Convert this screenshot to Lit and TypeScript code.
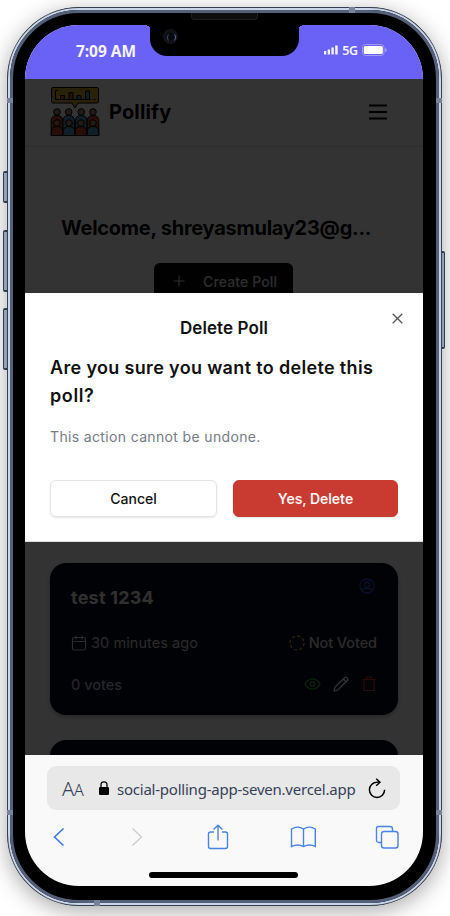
import { LitElement, html, css, svg } from "lit";
import { customElement } from "lit/decorators.js";

const people = [
  { x: 7, y: 26, c: "#c9412c" },
  { x: 18.7, y: 26, c: "#4f9cc4" },
  { x: 31.3, y: 26, c: "#4f9cc4" },
  { x: 43, y: 26, c: "#c9412c" },
  { x: 7, y: 37, c: "#c9412c" },
  { x: 19, y: 37, c: "#4f9cc4" },
  { x: 31, y: 37, c: "#c9412c" },
  { x: 43, y: 37, c: "#4f9cc4" },
];

const logo = html`<svg class="logo" viewBox="0 0 50 50" stroke="#000" stroke-width="1">
  <path d="M3 1.500H47Q48.500 1.500 48.500 3V15Q48.500 17 47 17H28L25 22L22 17H3Q1.500 17 1.500 15V3Q1.500 1.500 3 1.500Z" fill="#d3a52f"/>
  <path d="M8 4.500H5.500V13.500H41M43.500 13.500h2" fill="none"/>
  <path d="M10.500 9.500h4v4h-4z M19 6.500h4v7h-4z" fill="#b85138"/>
  <path d="M27 9.500h4v4h-4z M35.500 5h4v8.500h-4z" fill="#5590a8"/>
  ${people.map(p => svg`<path d="M${p.x - 5.8} 49.500V${p.y + 9}Q${p.x - 5.8} ${p.y + 3.5} ${p.x} ${p.y + 3.5}T${p.x + 5.8} ${p.y + 9}V49.500Z" fill=${p.c}/><circle cx=${p.x} cy=${p.y} r="3.300" fill="#a8806c"/>`)}
</svg>`;

@customElement("app-root")
export class AppRoot extends LitElement {
  static styles = css`
    :host { display: block; width: 450px; height: 916px; overflow: hidden; background: #fff; }
    * { box-sizing: border-box; }
    svg { display: block; fill: none; flex: none; }
    .stage { position: relative; width: 450px; height: 916px; padding: 7px 8px 10px 7px; overflow: hidden; font-family: Inter, "Liberation Sans", sans-serif; }
    .phone { position: relative; height: 899px; border-radius: 72px; background: #000; border: 1px solid #353f4f;
      box-shadow: 0 5px 22px rgba(0,0,0,.34); padding: 17px 18px 18px 17px; }
    .rim { position: absolute; inset: 0; border-radius: 71px; border: 2px solid #c9d5e9; pointer-events: none; }
    .rim::after { content: ""; position: absolute; inset: 0; border-radius: 69px; border: 3px solid #536078; }
    .band { position: absolute; background: #77829b; }
    .b1 { left: -1px; top: 90px; width: 6px; height: 5px; }
    .b2 { right: -1px; top: 90px; width: 6px; height: 5px; }
    .b3 { left: -1px; top: 802px; width: 6px; height: 5px; }
    .b4 { right: -1px; top: 802px; width: 6px; height: 5px; }
    .b5 { left: 341px; top: -1px; width: 6px; height: 6px; }
    .b6 { left: 86px; bottom: -1px; width: 6px; height: 6px; }
    .key { position: absolute; width: 5px; border: 1px solid #39475c; background: #aebfd8; border-radius: 2px 0 0 2px; border-top-width: 2px; border-bottom-width: 2px; }
    .k1 { left: 3px; top: 171px; height: 32px; }
    .k2 { left: 3px; top: 230px; height: 62px; }
    .k3 { left: 3px; top: 308px; height: 62px; }
    .k4 { left: 441px; width: 4px; top: 251px; height: 98px; border-radius: 0 2px 2px 0; }
    .screen { position: relative; width: 398px; height: 861px; border-radius: 54px; overflow: hidden; background: #f9f9f9; display: flex; flex-direction: column; }
    .notch { position: absolute; left: 125px; top: -1px; width: 149px; height: 32px; background: #000; border-radius: 0 0 17px 17px; }
    .notch::before, .notch::after { content: ""; position: absolute; top: 1px; width: 4px; height: 4px; }
    .notch::before { left: -3px; background: radial-gradient(circle at 0 100%, transparent 3px, #000 3.5px); }
    .notch::after { right: -3px; background: radial-gradient(circle at 100% 100%, transparent 3px, #000 3.5px); }
    .cam { position: absolute; left: 13px; top: 5px; width: 15px; height: 15px; border-radius: 50%; background: radial-gradient(circle at 50% 50%, #07080e 0 3px, #101217 5px, #111317 7px); }
    .cam::after { content: ""; position: absolute; left: 4px; top: 4px; width: 7px; height: 7px; border-radius: 50%; border: 1px solid transparent; border-left-color: #3f4c78; border-right-color: #5c6c98; }
    .speaker { position: absolute; left: 183px; top: 5px; width: 67px; height: 7px; background: #0e0e0e; border: 1px solid #1f1f1f; border-top: 0; border-radius: 0 0 4px 4px; }
    .status { height: 54px; flex: none; background: #6a62f6; color: #f4f2ff; font-family: "Noto Sans", sans-serif; display: flex; justify-content: space-between; padding: 15px 36px 0 51px; }
    .time { font-size: 15.5px; line-height: 23px; font-weight: 700; white-space: nowrap; letter-spacing: -.05px; }
    .net { display: flex; height: 20px; align-items: center; gap: 4px; font-size: 12.5px; font-weight: 600; }
    .g5 { letter-spacing: -.2px; padding-top: 1px; }
    .page { position: relative; height: 676px; flex: none; overflow: hidden; background: #fff; color: #080808; }
    .head { height: 68px; border-bottom: 1px solid #e0e0e0; padding: 7px 36px 10px 25px; display: flex; align-items: center; }
    .logo { width: 50px; height: 50px; }
    .burger { margin-top: 2px; }
    .brand { font-size: 20px; font-weight: 700; margin-left: 9px; flex: 1; padding-top: 1px; letter-spacing: .15px; }
    .hero { padding: 65px 36px 0; height: 416px; display: flex; flex-direction: column; align-items: flex-start; }
    .welcome { font-size: 20px; line-height: 32px; font-weight: 700; white-space: nowrap; letter-spacing: -.26px; }
    .create { display: flex; align-items: center; margin: 19px 0 0 93px; width: 139px; height: 36px; padding-left: 19px; gap: 18px; background: #090909; color: #ddd; border-radius: 6px; font-size: 14px; font-weight: 500; white-space: nowrap; letter-spacing: .12px; }
    .card { margin: 0 25px 25px; height: 152px; border-radius: 16px; background: #060a1c; color: #f0f0ea; padding: 13px 21px 20px; display: flex; flex-direction: column; box-shadow: 0 2px 4px rgba(0,0,0,.3); font-size: 14.5px; }
    .row { display: flex; justify-content: space-between; align-items: center; white-space: nowrap; }
    .left { display: flex; align-items: center; gap: 4px; }
    .r1 { height: 44px; align-items: flex-start; }
    .name { font-size: 18px; font-weight: 700; padding-top: 10px; line-height: 24px; letter-spacing: .22px; }
    .usr { margin-right: 2px; margin-top: 2px; }
    .r2 { height: 23px; margin-top: 11px; color: #d4d4d4; }
    .ago { letter-spacing: .07px; }
    .nv { font-weight: 500; letter-spacing: -.08px; }
    .r3 { height: 20px; margin-top: 20px; }
    .votes { color: #b5b2dc; font-weight: 500; }
    .acts { display: flex; gap: 12px; }
    .veil { position: absolute; inset: 0; background: rgba(0,0,0,.8); }
    .modal { position: absolute; left: 0; top: 214px; width: 398px; height: 249px; background: #fff; color: #111; padding: 21px 25px 25px; border-bottom: 1px solid #ddd; }
    .close { position: absolute; right: 20px; top: 20px; }
    .mt { text-align: center; font-size: 17px; font-weight: 600; line-height: 28px; white-space: nowrap; letter-spacing: .1px; }
    .q { margin: 12px 0 0; font-size: 18px; line-height: 28px; font-weight: 600; white-space: nowrap; letter-spacing: .34px; }
    .qb { letter-spacing: .6px; }
    .note { margin: 17px 0 0; font-size: 14px; line-height: 20px; color: #777c88; white-space: nowrap; letter-spacing: .35px; }
    .btns { display: grid; grid-template-columns: 167px 165px; gap: 16px; margin-top: 33px; }
    .btn { height: 37px; border-radius: 6px; display: flex; align-items: center; justify-content: center; font-size: 14px; font-weight: 500; border: 1px solid #e2e4e8; box-shadow: 0 1px 2px rgba(0,0,0,.1); white-space: nowrap; }
    .red { background: #c93a31; border-color: #c93a31; color: #fff5f3; font-weight: 600; }
    .yd { letter-spacing: -.04px; }
    .chrome { flex: 1; padding: 11px 22px 8px; display: flex; flex-direction: column; font-family: "Noto Sans", sans-serif; }
    .url { width: 353px; height: 44px; background: #e8e8e8; border-radius: 9px; display: flex; align-items: center; color: #364158; padding: 0 14px 0 15px; }
    .aa { font-size: 20px; width: 37px; font-weight: 300; letter-spacing: -.3px; }
    .aa small { font-size: 16px; }
    .addr { font-size: 15px; margin-left: 8px; flex: 1; white-space: nowrap; letter-spacing: -.23px; padding-top: 1px; }
    .nav { display: flex; align-items: center; height: 28px; margin-top: 13px; padding-left: 6px; }
    .fwd { margin-left: 66px; }
    .share { margin-left: 64px; }
    .book { margin-left: 61px; }
    .tabs { margin-left: 59px; }
    .home { width: 149px; height: 6px; border-radius: 3px; background: #000; margin: 21px 0 0 102px; }
  `;

  render() {
    return html`<div class="stage">
      <div class="key k1"></div><div class="key k2"></div><div class="key k3"></div><div class="key k4"></div>
      <div class="phone">
        <div class="rim"></div>
        <div class="band b1"></div><div class="band b2"></div><div class="band b3"></div>
        <div class="band b4"></div><div class="band b5"></div><div class="band b6"></div>
        <div class="speaker"></div>
        <div class="screen">
          <div class="status">
            <span class="time">7:09 AM</span>
            <span class="net">
              <svg width="14" height="10" viewBox="0 0 14 10"><path fill="#f4f2ff" d="M0 6h2.300v3.500H0zM3.700 4.500H6v5H3.700zM7.400 2.500h2.400v7H7.400zM11.200 0.500h2.500v9h-2.500z"/></svg>
              <span class="g5">5G</span>
              <svg width="25" height="12" viewBox="0 0 25 12"><rect x=".5" y=".5" width="21.500" height="11" rx="3" stroke="#a19bfa"/><rect x="1.800" y="2" width="19" height="8" rx="1.500" fill="#fff"/><path d="M23.800 4.500v3" stroke="#c3c0fc"/></svg>
            </span>
          </div>
          <div class="page">
            <div class="head">${logo}<span class="brand">Pollify</span>
              <svg class="burger" width="18" height="16" viewBox="0 0 18 16" stroke="#000" stroke-width="2"><path d="M0 1.500h18M0 8h18M0 14.500h18"/></svg>
            </div>
            <div class="hero">
              <div class="welcome">Welcome, shreyasmulay23@g...</div>
              <div class="create">
                <svg width="12" height="12" viewBox="0 0 12 12" stroke="#ddd" stroke-width="1.100"><path d="M6 .5v11M.5 6h11"/></svg>
                <span>Create Poll</span>
              </div>
            </div>
            <div class="card">
              <div class="row r1"><span class="name">test 1234</span>
                <svg class="usr" width="16" height="16" viewBox="0 0 16 16" stroke="#2850d0" stroke-width="1.300"><circle cx="8" cy="8" r="7"/><circle cx="8" cy="6.500" r="2.500"/><path d="M3.500 13.200v-1q0-1.700 1.800-1.700h5.400q1.800 0 1.800 1.700v1"/></svg>
              </div>
              <div class="row r2">
                <span class="left"><svg width="16" height="16" viewBox="0 0 16 16" stroke="#d4d4d4" stroke-width="1.100"><rect x="1.500" y="2.500" width="13" height="12.500" rx="1.500"/><path d="M1.500 6.500h13M5 .5v4M11 .5v4"/></svg><span class="ago">30 minutes ago</span></span>
                <span class="left"><svg width="16" height="16" viewBox="0 0 16 16" stroke="#e0b040" stroke-width="1.300"><circle cx="8" cy="8" r="7" stroke-dasharray="3.200 2.300"/></svg><span class="nv">Not Voted</span></span>
              </div>
              <div class="row r3"><span class="votes">0 votes</span>
                <span class="acts">
                  <svg width="17" height="16" viewBox="0 0 17 16" stroke="#2fae4a" stroke-width="1.300"><path d="M1 8Q4 2.800 8.500 2.800T16 8Q13 13.200 8.500 13.200T1 8Z"/><circle cx="8.500" cy="8" r="2.200"/></svg>
                  <svg width="16" height="16" viewBox="0 0 16 16" stroke="#fff" stroke-width="1.200"><path d="M1 15l1-4L12 1.300q1-.7 2.200.5t.5 2.200L5 14ZM10.200 3l2.800 2.800"/></svg>
                  <svg width="16" height="16" viewBox="0 0 16 16" stroke="#e03224" stroke-width="1.200"><path d="M1.500 3.500h13M3 3.500V14.500h10V3.500M5.500 3.500V1h5v2.500"/></svg>
                </span>
              </div>
            </div>
            <div class="card"></div>
            <div class="veil"></div>
            <div class="modal">
              <svg class="close" width="11" height="11" viewBox="0 0 11 11" stroke="#555" stroke-width="1.300"><path d="M.7.7l9.600 9.600M10.300.7L.7 10.300"/></svg>
              <div class="mt">Delete Poll</div>
              <div class="q"><span>Are you sure you want to delete this</span><br><span class="qb">poll?</span></div>
              <div class="note">This action cannot be undone.</div>
              <div class="btns"><div class="btn"><span>Cancel</span></div><div class="btn red"><span class="yd">Yes, Delete</span></div></div>
            </div>
          </div>
          <div class="chrome">
            <div class="url"><span class="aa">A<small>A</small></span>
              <svg width="10" height="14" viewBox="0 0 10 14"><rect y="6" width="10" height="8" rx="1.300" fill="#000"/><path d="M2 7V3.800q0-3 3-3t3 3V7" stroke="#000" stroke-width="1.300"/></svg>
              <span class="addr">social-polling-app-seven.vercel.app</span>
              <svg width="18" height="21" viewBox="0 0 18 21" stroke="#000" stroke-width="1.500"><path d="M12 4.200H9A7.600 7.600 0 1 0 16.600 11.800M8.200.7L12 4.200L8.200 7.800"/></svg>
            </div>
            <div class="nav">
              <svg width="12" height="20" viewBox="0 0 12 20" stroke="#3c78e6" stroke-width="1.600"><path d="M10.500 1.500L1.500 10l9 8.500"/></svg>
              <svg class="fwd" width="12" height="20" viewBox="0 0 12 20" stroke="#ccc" stroke-width="1.300"><path d="M1.500 1.500l9 8.500-9 8.500"/></svg>
              <svg class="share" width="22" height="26" viewBox="0 0 22 26" stroke="#4a83e6" stroke-width="1.400"><path d="M7 8H3.500Q1.500 8 1.500 10V22.500Q1.500 24.500 3.500 24.500H18.500Q20.500 24.500 20.500 22.500V10Q20.500 8 18.500 8H15M11 16.500V1.500M6.500 5.500L11 1.200l4.500 4.300"/></svg>
              <svg class="book" width="26" height="22" viewBox="0 0 26 22" stroke="#4a83e6" stroke-width="1.400"><path d="M13.500 3Q7.500-.8 1.500 3V20.500Q7.500 17.500 13.500 20.500Q19.500 17.500 25.300 20.500V3Q19.500-.8 13.500 3V20.500"/></svg>
              <svg class="tabs" width="24" height="24" viewBox="0 0 24 24" stroke="#4a83e6" stroke-width="1.400"><path d="M6.500 17.500H4Q1.500 17.500 1.500 15V3.500Q1.500 1.500 3.500 1.500H15Q17.500 1.500 17.500 4V6.500"/><rect x="6.500" y="6.500" width="16.500" height="16.500" rx="2.500"/></svg>
            </div>
            <div class="home"></div>
          </div>
          <div class="notch"><div class="cam"></div></div>
        </div>
      </div>
    </div>`;
  }
}
